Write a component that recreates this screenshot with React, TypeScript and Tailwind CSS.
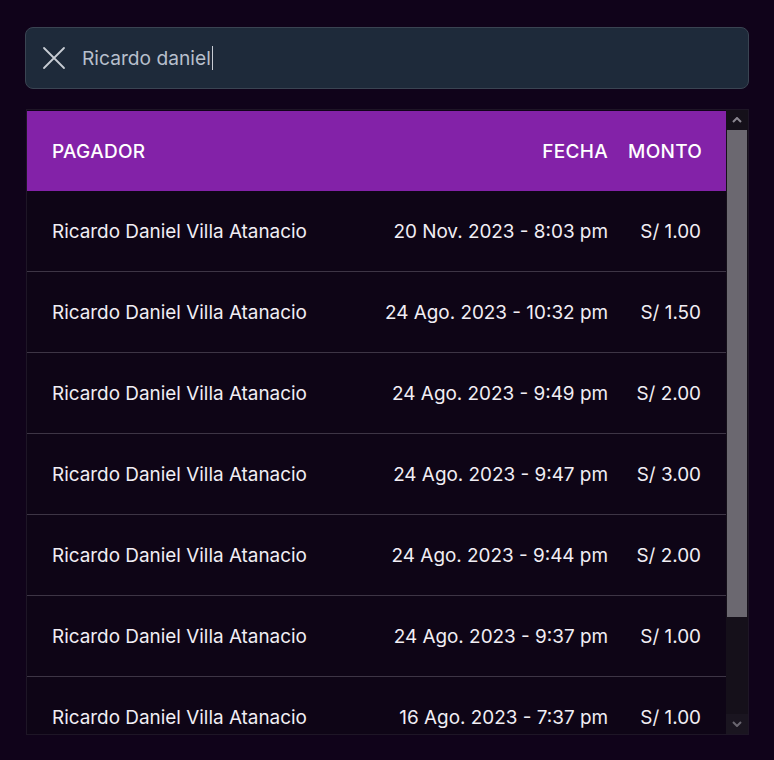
import React from "react";

const rows = [
  ["Ricardo Daniel Villa Atanacio", "20 Nov. 2023 - 8:03 pm", "S/ 1.00"],
  ["Ricardo Daniel Villa Atanacio", "24 Ago. 2023 - 10:32 pm", "S/ 1.50"],
  ["Ricardo Daniel Villa Atanacio", "24 Ago. 2023 - 9:49 pm", "S/ 2.00"],
  ["Ricardo Daniel Villa Atanacio", "24 Ago. 2023 - 9:47 pm", "S/ 3.00"],
  ["Ricardo Daniel Villa Atanacio", "24 Ago. 2023 - 9:44 pm", "S/ 2.00"],
  ["Ricardo Daniel Villa Atanacio", "24 Ago. 2023 - 9:37 pm", "S/ 1.00"],
  ["Ricardo Daniel Villa Atanacio", "16 Ago. 2023 - 7:37 pm", "S/ 1.00"],
];

export default function App() {
  return (
    <div
      className="w-[774px] h-[760px] bg-[#10031a] overflow-hidden pt-[27px] px-[25px]"
      style={{ fontFamily: "Inter, 'Noto Sans', sans-serif" }}
    >
      <div className="h-[62px] rounded-lg border border-[#3a4452] bg-[#1e2a3a] flex items-center pl-[16px]">
        <svg width="24" height="24" viewBox="0 0 24 24" fill="none" stroke="#c8ccd4" strokeWidth="1.8" strokeLinecap="round">
          <path d="M2 2L22 22M22 2L2 22" />
        </svg>
        <span className="ml-[16px] text-[19.2px] text-[#b7bfcc]">Ricardo daniel</span>
        <span className="ml-[1px] w-px h-[24px] bg-[#c8ccd4]" />
      </div>

      <div className="mt-[20px] h-[626px] ml-px border border-[#1e1626] flex">
        <div className="flex-1 overflow-hidden">
          <div className="mt-px h-[80px] pt-[2px] bg-[#8322a8] flex items-center px-[25px] text-white text-[19px] font-medium tracking-[0.3px]">
            <div className="flex-1">PAGADOR</div>
            <div className="text-right">FECHA</div>
            <div className="ml-[20px] w-[73px] text-right">MONTO</div>
          </div>
          {rows.map((r, i) => (
            <div
              key={i}
              className="h-[81px] pt-[2px] flex items-center px-[25px] text-[18.9px] text-[#f1eef4] border-b border-[#3d3545] bg-[#0e0516]"
            >
              <div className="flex-1">{r[0]}</div>
              <div className="text-right">{r[1]}</div>
              <div className="ml-[20px] w-[73px] text-right">{r[2]}</div>
            </div>
          ))}
        </div>
        <div className="w-[22px] bg-[#15101a] flex flex-col">
          <div className="h-[20px] flex items-center justify-center">
            <svg width="10" height="6" viewBox="0 0 10 6" fill="none" stroke="#8a8690" strokeWidth="2">
              <path d="M1 5L5 1L9 5" />
            </svg>
          </div>
          <div className="h-[487px] mx-[1px] bg-[#6b6870]" />
          <div className="flex-1" />
          <div className="h-[20px] flex items-center justify-center bg-[#1a1520]">
            <svg width="10" height="6" viewBox="0 0 10 6" fill="none" stroke="#6a6670" strokeWidth="2">
              <path d="M1 1L5 5L9 1" />
            </svg>
          </div>
        </div>
      </div>
    </div>
  );
}
